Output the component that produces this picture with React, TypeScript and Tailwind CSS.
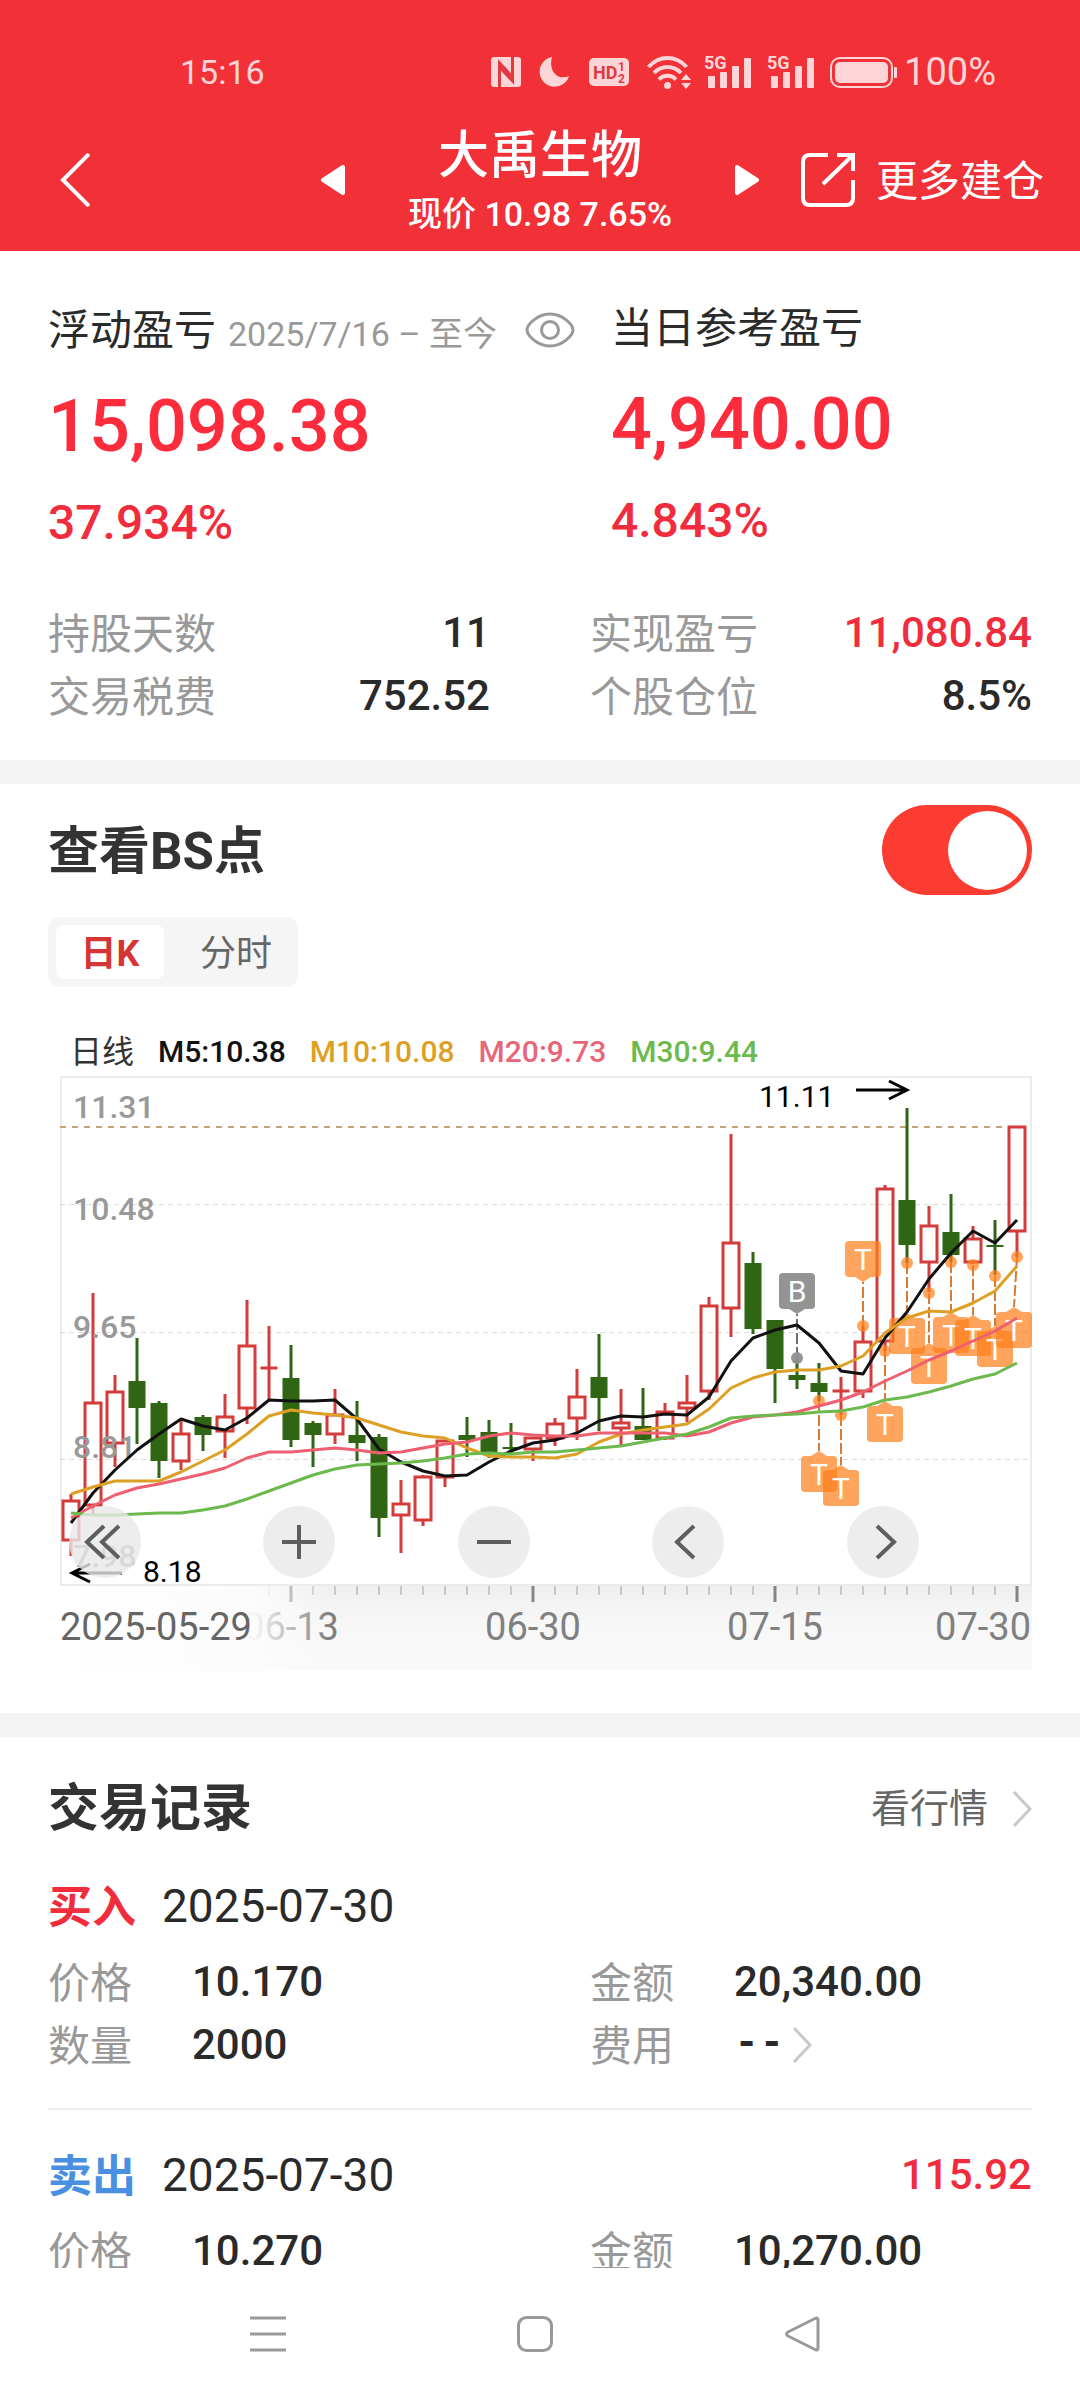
import { useState, type ReactNode } from "react";

const STEP = 22;
const FIRST = 11;
const cx = (i: number) => FIRST + STEP * i;

type Candle = ["r" | "g", number, number, number, number];

// direction, high, body top, body bottom, low
const candles: Candle[] = [
  ["r", 418, 425, 464, 480],
  ["r", 217, 327, 429, 438],
  ["r", 299, 316, 367, 391],
  ["g", 262, 305, 332, 368],
  ["g", 325, 327, 385, 402],
  ["r", 344, 358, 385, 394],
  ["g", 339, 341, 359, 375],
  ["r", 318, 341, 355, 382],
  ["r", 224, 270, 332, 348],
  ["r", 250, 292, 292, 324],
  ["g", 269, 302, 364, 371],
  ["g", 345, 347, 359, 391],
  ["r", 313, 339, 358, 368],
  ["g", 325, 359, 367, 385],
  ["g", 358, 361, 442, 461],
  ["r", 404, 428, 439, 477],
  ["r", 399, 401, 444, 450],
  ["r", 364, 365, 401, 411],
  ["g", 341, 359, 364, 381],
  ["g", 344, 356, 376, 382],
  ["g", 347, 372, 372, 379],
  ["r", 361, 362, 373, 385],
  ["r", 342, 348, 362, 370],
  ["r", 293, 321, 342, 364],
  ["g", 258, 301, 322, 355],
  ["r", 313, 347, 352, 369],
  ["g", 312, 350, 364, 364],
  ["r", 327, 336, 362, 364],
  ["r", 299, 327, 332, 346],
  ["r", 221, 230, 315, 324],
  ["r", 58, 167, 232, 261],
  ["g", 176, 187, 253, 258],
  ["g", 244, 244, 293, 327],
  ["g", 282, 299, 304, 313],
  ["g", 287, 307, 316, 325],
  ["r", 301, 315, 315, 339],
  ["r", 250, 266, 315, 322],
  ["r", 109, 113, 265, 275],
  ["g", 32, 124, 169, 187],
  ["r", 130, 150, 186, 216],
  ["g", 118, 156, 179, 186],
  ["r", 150, 163, 186, 188],
  ["g", 144, 170, 170, 199],
  ["r", 51, 51, 155, 181],
];

const ma5 = [447, 417, 394, 374, 358, 343, 350, 354, 342, 324, 325, 325, 324, 343, 373, 386, 395, 400, 399, 386, 375, 367, 364, 357, 345, 340, 341, 338, 339, 321, 285, 262, 254, 249, 267, 295, 298, 262, 236, 203, 177, 155, 167, 144];
const ma10 = [418, 411, 405, 405, 405, 396, 385, 374, 358, 340, 334, 337, 339, 342, 349, 356, 360, 362, 372, 380, 381, 381, 382, 378, 366, 358, 354, 351, 348, 333, 312, 302, 296, 294, 294, 290, 280, 257, 242, 235, 236, 227, 215, 190];
const ma20 = [442, 430, 419, 412, 408, 403, 398, 392, 382, 376, 376, 374, 372, 374, 377, 376, 372, 368, 366, 360, 357, 359, 360, 360, 357, 357, 357, 357, 360, 356, 347, 341, 339, 336, 330, 324, 316, 305, 295, 284, 275, 265, 255, 242];
const ma30 = [437, 439, 439, 438, 437, 437, 434, 430, 423, 415, 407, 399, 393, 389, 388, 387, 385, 382, 378, 377, 378, 376, 376, 374, 372, 370, 366, 362, 358, 351, 342, 340, 339, 338, 336, 335, 331, 324, 321, 316, 310, 303, 298, 287];

type Marker = { i: number; dot: number; box: number; x?: number; kind?: "B" };

const markers: Marker[] = [
  { i: 33, dot: 282, box: 197, kind: "B" },
  { i: 36, dot: 250, box: 165 },
  { i: 34, dot: 325, box: 380 },
  { i: 35, dot: 339, box: 394 },
  { i: 37, dot: 275, box: 330 },
  { i: 38, dot: 187, box: 242 },
  { i: 39, dot: 217, box: 272 },
  { i: 40, dot: 186, box: 241 },
  { i: 41, dot: 189, box: 244 },
  { i: 42, dot: 200, box: 255 },
  { i: 43, dot: 181, box: 236, x: 954 },
];

const toPoints = (ys: number[]) => ys.map((y, i) => `${cx(i)},${y}`).join(" ");

function CandleShape({ i, c }: { i: number; c: Candle }) {
  const [dir, high, top, bottom, low] = c;
  const x = cx(i);
  if (dir === "g") {
    return (
      <g fill="#2f6513">
        <rect x={x - 1.5} y={high} width={3} height={low - high} />
        <rect x={x - 8.5} y={top === bottom ? top - 1 : top} width={17} height={Math.max(bottom - top, 2)} />
      </g>
    );
  }
  return (
    <g stroke="#d43b3b" strokeWidth={3} fill="none">
      <path d={`M${x} ${high}V${top}M${x} ${bottom}V${low}`} />
      {top === bottom ? <path d={`M${x - 8.5} ${top}h17`} /> : <rect x={x - 8} y={top} width={16} height={bottom - top} />}
    </g>
  );
}

function MarkerShape({ m }: { m: Marker }) {
  const x = cx(m.i);
  const bx = m.x ?? x;
  const below = m.box > m.dot;
  const color = m.kind === "B" ? "#8f8f8f" : "#ff801b";
  const opacity = m.kind === "B" ? 0.95 : 0.71;
  const tip = below ? m.box - 5 : m.box + 41;
  const edge = below ? m.box : m.box + 36;
  return (
    <g>
      <path d={`M${x} ${m.dot}L${bx} ${tip}`} stroke={m.kind === "B" ? "#6e6e6e" : "#d97a33"} strokeWidth={2} strokeDasharray="11 3" />
      <circle cx={x} cy={m.dot} r={6} fill={color} opacity={opacity} />
      <g fill={color} opacity={opacity}>
        <rect x={bx - 18} y={m.box} width={36} height={36} rx={4} />
        <path d={`M${bx - 8} ${edge}L${bx} ${tip}L${bx + 8} ${edge}Z`} />
      </g>
      <text x={bx} y={m.box + 29} textAnchor="middle" fontSize={30} fill="#fff">
        {m.kind ?? "T"}
      </text>
    </g>
  );
}

function CandleChart() {
  const labels: [string, number][] = [
    ["11.31", 42],
    ["10.48", 144],
    ["9.65", 262],
    ["8.81", 382],
    ["7.98", 491],
  ];
  return (
    <svg viewBox="0 0 972 510" className="block h-auto w-full overflow-visible" role="img" aria-label="日K线图">
      <rect x={1} y={1} width={970} height={508} fill="none" stroke="#ebebeb" strokeWidth={2} />
      <g stroke="#dcdcdc" strokeWidth={1} strokeDasharray="5 4">
        <path d="M0 128.5H972M0 256.5H972M0 383.5H972" />
      </g>
      <path d="M0 51H950" stroke="#c4a474" strokeWidth={2} strokeDasharray="6 6" />
      {candles.map((c, i) => (
        <CandleShape key={i} i={i} c={c} />
      ))}
      <g fontSize={32} fontWeight={500} fill="#999">
        {labels.map(([t, y]) => (
          <text key={t} x={13} y={y}>
            {t}
          </text>
        ))}
      </g>
      {markers.map((m) => (
        <MarkerShape key={m.i} m={m} />
      ))}
      <g fill="none" strokeWidth={3} strokeLinejoin="round">
        <polyline points={toPoints(ma5)} stroke="#111" />
        <polyline points={toPoints(ma10)} stroke="#dd9f24" />
        <polyline points={toPoints(ma20)} stroke="#ee6070" />
        <polyline points={toPoints(ma30)} stroke="#6cb94e" />
      </g>
      <g fontSize={30} fill="#000">
        <text x={699} y={31}>11.11</text>
        <text x={83} y={506}>8.18</text>
      </g>
      <g fill="none" stroke="#000" strokeWidth={3}>
        <path d="M796 14H847M829 5L847 14L829 23" />
        <path d="M62 497H12M30 488L12 497L30 506" />
      </g>
    </svg>
  );
}

function TimeAxis() {
  const ticks = Array.from({ length: 35 }, (_, k) => k + 9);
  const major = new Set([10, 21, 32, 43]);
  return (
    <svg viewBox="0 0 972 85" className="block h-auto w-full" role="img" aria-label="时间轴">
      <defs>
        <linearGradient id="strip" x1="0" y1="0" x2="0" y2="1">
          <stop offset="0" stopColor="#efefef" />
          <stop offset="0.4" stopColor="#f7f7f7" />
          <stop offset="1" stopColor="#fafafa" />
        </linearGradient>
        <linearGradient id="fade" x1="0" y1="0" x2="1" y2="0">
          <stop offset="0" stopColor="#fff" />
          <stop offset="0.72" stopColor="#fcfcfc" stopOpacity="0.95" />
          <stop offset="1" stopColor="#fafafa" stopOpacity="0" />
        </linearGradient>
      </defs>
      <rect width={972} height={85} fill="url(#strip)" />
      <g stroke="#a0a0a0">
        {ticks.map((i) =>
          major.has(i) ? (
            <path key={i} d={`M${cx(i)} 0V16`} stroke="#858585" strokeWidth={3} />
          ) : (
            <path key={i} d={`M${cx(i)} 0V9`} strokeWidth={1} />
          ),
        )}
      </g>
      <g fontSize={38} fill="#808080">
        <text x={231} y={54} textAnchor="middle">06-13</text>
        <text x={473} y={54} textAnchor="middle">06-30</text>
        <text x={715} y={54} textAnchor="middle">07-15</text>
        <text x={971} y={54} textAnchor="end">07-30</text>
      </g>
      <rect width={270} height={85} fill="url(#fade)" />
      <text x={0} y={54} fontSize={38} fill="#666">2025-05-29</text>
    </svg>
  );
}

function RoundButton({ label, path }: { label: string; path: string }) {
  return (
    <div className="pl-[9px]">
      <button type="button" aria-label={label} className="flex size-[72px] items-center justify-center rounded-full bg-[#e9e9e9]/80">
        <svg viewBox="0 0 72 72" className="size-[72px]" fill="none" stroke="#5e5e5e" strokeWidth={4}>
          <path d={path} />
        </svg>
      </button>
    </div>
  );
}

function Stat({ label, value, red }: { label: string; value: string; red?: boolean }) {
  return (
    <div className="flex items-center justify-between text-[42px] leading-[63px]">
      <dt className="pt-1 leading-[59px] text-[#999]">{label}</dt>
      <dd className={red ? "font-medium text-[#f02c3d]" : "font-medium text-[#2a2a2a]"}>{value}</dd>
    </div>
  );
}

function Field({ label, children }: { label: string; children: ReactNode }) {
  return (
    <div className="flex items-center text-[42px] leading-[63px]">
      <dt className="w-36 pt-1 leading-[59px] text-[#999]">{label}</dt>
      <dd className="flex items-center gap-2 font-medium text-[#2a2a2a]">{children}</dd>
    </div>
  );
}

function Chevron() {
  return (
    <svg viewBox="0 0 20 36" className="h-9 w-5" fill="none" stroke="#c8c8c8" strokeWidth={3}>
      <path d="M2 1L18 18L2 35" />
    </svg>
  );
}

function Signal() {
  return (
    <svg viewBox="0 0 46 34" className="h-[34px] w-[46px] overflow-visible" fill="#fdd5d7">
      <text x={-1} y={14} fontSize={18} fontWeight={700}>5G</text>
      <rect x={3} y={21} width={7} height={12} rx={1} />
      <rect x={15} y={17} width={7} height={16} rx={1} />
      <rect x={27} y={11} width={7} height={22} rx={1} />
      <rect x={39} y={3} width={7} height={30} rx={1} />
    </svg>
  );
}

function StatusBar() {
  return (
    <div className="flex h-12 items-center justify-between pr-[84px] pl-[180px] text-[#fdd5d7]">
      <span className="text-[34px] leading-12">15:16</span>
      <div className="flex items-center">
        <svg viewBox="0 0 30 30" className="size-[30px]">
          <rect width={30} height={30} rx={3} fill="#fdd5d7" />
          <path d="M8.500 30V6L21.500 20M21.500 0V24L8.500 10" fill="none" stroke="#e03a42" strokeWidth={3} />
        </svg>
        <svg viewBox="0 0 30 30" className="ml-[18px] size-[30px]" fill="#fdd5d7">
          <path d="M13 0A15 15 0 1 0 30 19C19 24 9 14 13 0Z" />
        </svg>
        <svg viewBox="0 0 40 28" className="ml-5 h-7 w-10 overflow-visible">
          <rect width={40} height={28} rx={5} fill="#fdd5d7" />
          <g fill="#e03a42" fontWeight={700}>
            <text x={4} y={21} fontSize={18}>HD</text>
            <text x={29} y={13} fontSize={12}>1</text>
            <text x={29} y={25} fontSize={12}>2</text>
          </g>
        </svg>
        <svg viewBox="0 0 44 34" className="ml-[18px] h-[34px] w-11" fill="none" stroke="#fdd5d7" strokeWidth={4}>
          <path d="M1.500 12C12 0 29 0 39.500 12M7 18C14.500 10 26.500 10 34 18M12 24.500C16.500 19.500 24.500 19.500 29 24.500" />
          <circle cx={20.5} cy={30.5} r={3.5} fill="#fdd5d7" stroke="none" />
          <path d="M34 25L39 19L44 25ZM34 28H44L39 34Z" fill="#fdd5d7" stroke="none" />
        </svg>
        <div className="ml-3.5 flex gap-[17px]">
          <Signal />
          <Signal />
        </div>
        <svg viewBox="0 0 67 31" className="ml-4 h-[31px] w-[67px]">
          <rect x={1} y={1} width={61} height={29} rx={9} fill="none" stroke="#fdd5d7" strokeWidth={2} />
          <rect x={5} y={5} width={53} height={21} rx={5} fill="#fdd5d7" />
          <rect x={64} y={10} width={3} height={11} rx={1} fill="#fdd5d7" />
        </svg>
        <span className="ml-[7px] text-[38px] leading-12">100%</span>
      </div>
    </div>
  );
}

function Triangle({ flip }: { flip?: boolean }) {
  return (
    <svg viewBox="0 0 24 30" className={flip ? "h-[30px] w-6 rotate-180" : "h-[30px] w-6"} fill="#fff" stroke="#fff" strokeWidth={4} strokeLinejoin="round">
      <path d="M22 2V28L2 15Z" />
    </svg>
  );
}

function Header() {
  return (
    <header className="shrink-0 bg-[#f13038] pt-12 pb-[15px] text-white">
      <StatusBar />
      <div className="mt-7 grid grid-cols-[1fr_438px_1fr] items-center">
        <button type="button" aria-label="返回" className="pl-[60px]">
          <svg viewBox="0 0 30 54" className="h-[54px] w-[30px]" fill="none" stroke="#fff" strokeWidth={4}>
            <path d="M29 1L3 27L29 53" />
          </svg>
        </button>
        <div className="flex items-center justify-between">
          <button type="button" aria-label="上一只">
            <Triangle />
          </button>
          <div className="flex flex-col items-center gap-1">
            <h1 className="text-[51px] leading-[64px] font-medium">大禹生物</h1>
            <p className="text-[34px] leading-[44px] font-medium">现价 10.98 7.65%</p>
          </div>
          <button type="button" aria-label="下一只">
            <Triangle flip />
          </button>
        </div>
        <a href="#more" className="flex items-center justify-end gap-[21px] pr-9 text-[42px] leading-[60px] whitespace-nowrap">
          <svg viewBox="0 0 54 54" className="size-[54px]" fill="none" stroke="#fff" strokeWidth={4}>
            <path d="M27 2H9Q2 2 2 9V45Q2 52 9 52H45Q52 52 52 45V27M36 2H52V18M52 2L22 31" />
          </svg>
          <span className="pt-1">更多建仓</span>
        </a>
      </div>
    </header>
  );
}

function Summary() {
  return (
    <section className="px-12 pt-12 pb-[33px]">
      <div className="grid grid-cols-[563fr_421fr]">
        <div>
          <div className="flex h-[62px] items-center">
            <h2 className="text-[42px] text-[#2a2a2a]">浮动盈亏</h2>
            <span className="ml-3 pt-2 text-[34px] whitespace-nowrap text-[#999]">2025/7/16 – 至今</span>
            <button type="button" aria-label="显示或隐藏金额" className="mr-9 ml-auto">
              <svg viewBox="0 0 50 36" className="h-9 w-[50px]" fill="none" stroke="#999" strokeWidth={3}>
                <path d="M2 18C2 13 12 2 25 2S48 13 48 18S38 34 25 34S2 23 2 18Z" />
                <circle cx={25} cy={18} r={8.5} />
              </svg>
            </button>
          </div>
          <p className="mt-6 text-[72px] leading-[84px] font-medium text-[#fc2c3c]">15,098.38</p>
          <p className="mt-6 text-[48px] leading-[60px] font-medium text-[#f02c3d]">37.934%</p>
        </div>
        <div>
          <h2 className="text-[42px] leading-[60px] text-[#2a2a2a]">当日参考盈亏</h2>
          <p className="mt-6 text-[72px] leading-[84px] font-medium text-[#fc2c3c]">4,940.00</p>
          <p className="mt-6 text-[48px] leading-[60px] font-medium text-[#f02c3d]">4.843%</p>
        </div>
      </div>
      <dl className="mt-12 grid grid-cols-2 gap-x-[100px]">
        <Stat label="持股天数" value="11" />
        <Stat label="实现盈亏" value="11,080.84" red />
        <Stat label="交易税费" value="752.52" />
        <Stat label="个股仓位" value="8.5%" />
      </dl>
    </section>
  );
}

function ChartSection() {
  const [on, setOn] = useState(true);
  return (
    <section className="px-12 pt-[21px] pb-[42px]">
      <div className="flex items-center justify-between">
        <label htmlFor="bs" className="pt-1 text-[51px] leading-[64px] font-bold text-[#333]">
          查看BS点
        </label>
        <input
          id="bs"
          type="checkbox"
          role="switch"
          checked={on}
          onChange={(e) => setOn(e.target.checked)}
          className="flex h-[90px] w-[150px] appearance-none items-center rounded-full bg-gray-300 px-[5px] before:block before:size-[79px] before:rounded-full before:bg-white checked:justify-end checked:bg-[#fc3c31]"
        />
      </div>
      <div className="mt-[22px] flex w-fit rounded-xl bg-[#f5f5f5] p-2 text-[36px] leading-[50px]">
        <button type="button" className="w-[108px] rounded-lg bg-white pt-1 text-center font-bold text-[#d63535]">
          日K
        </button>
        <button type="button" className="w-[126px] pt-1 pl-[18px] text-center text-[#666]">
          分时
        </button>
      </div>
      <div className="mt-[41px] flex gap-6 pl-[22px] text-[30px] leading-12 font-medium">
        <span className="text-[32px] font-normal text-[#333]">日线</span>
        <span className="text-[#111]">M5:10.38</span>
        <span className="text-[#dd9f24]">M10:10.08</span>
        <span className="text-[#e8667a]">M20:9.73</span>
        <span className="text-[#6cb94e]">M30:9.44</span>
      </div>
      <div className="ml-3">
        <div className="relative">
          <CandleChart />
          <div className="absolute inset-x-0 bottom-2 grid grid-cols-5">
            <RoundButton label="最早" path="M35 20L18 36L35 52M50 20L33 36L50 52" />
            <RoundButton label="放大" path="M19 36H53M36 19V53" />
            <RoundButton label="缩小" path="M19 36H53" />
            <RoundButton label="向左" path="M42 20L25 36L42 52" />
            <RoundButton label="向右" path="M30 20L47 36L30 52" />
          </div>
        </div>
        <TimeAxis />
      </div>
    </section>
  );
}

function RecordHead({ side, color, profit }: { side: string; color: string; profit?: string }) {
  return (
    <div className="flex items-center">
      <h3 className={color}>{side}</h3>
      <time dateTime="2025-07-30" className="ml-[26px] pb-1 text-[46px] leading-[56px] text-[#2a2a2a]">
        2025-07-30
      </time>
      {profit && <span className="ml-auto pb-1 text-[42px] leading-[56px] font-medium text-[#f02c3d]">{profit}</span>}
    </div>
  );
}

function Records() {
  return (
    <section className="px-12 pt-10">
      <div className="flex items-center justify-between">
        <h2 className="text-[51px] leading-[64px] font-bold text-[#333]">交易记录</h2>
        <a href="#quote" className="flex items-center gap-6 text-[39px] leading-[60px] text-[#666]">
          看行情
          <Chevron />
        </a>
      </div>
      <article className="border-b-2 border-[#efefef] pt-[37px] pb-8">
        <RecordHead side="买入" color="text-[44px] leading-[60px] font-bold text-[#f02c3d]" />
        <dl className="mt-3 grid grid-cols-2 gap-x-[100px]">
          <Field label="价格">10.170</Field>
          <Field label="金额">20,340.00</Field>
          <Field label="数量">2000</Field>
          <Field label="费用">
            <span className="font-['Liberation_Mono',monospace] font-bold">--</span>
            <Chevron />
          </Field>
        </dl>
      </article>
      <article className="pt-[37px] pb-8">
        <RecordHead side="卖出" color="text-[44px] leading-[60px] font-bold text-[#4a90e2]" profit="115.92" />
        <dl className="mt-3 grid grid-cols-2 gap-x-[100px]">
          <Field label="价格">10.270</Field>
          <Field label="金额">10,270.00</Field>
        </dl>
      </article>
    </section>
  );
}

function SystemNav() {
  return (
    <nav className="grid h-[132px] shrink-0 grid-cols-3 items-center justify-items-center bg-white pr-[144px] pl-[134px]">
      <button type="button" aria-label="最近任务">
        <svg viewBox="0 0 36 36" className="size-9" stroke="#999" strokeWidth={3}>
          <path d="M0 2H36M0 18H36M0 34H36" />
        </svg>
      </button>
      <button type="button" aria-label="主屏幕">
        <svg viewBox="0 0 36 36" className="size-9" fill="none" stroke="#999" strokeWidth={3}>
          <rect x={1.5} y={1.5} width={33} height={33} rx={8} />
        </svg>
      </button>
      <button type="button" aria-label="返回上一页">
        <svg viewBox="0 0 36 36" className="size-9" fill="none" stroke="#999" strokeWidth={3} strokeLinejoin="round">
          <path d="M34 4V32Q34 35 31 33.500L4 20Q1 18 4 16L31 2.500Q34 1 34 4Z" />
        </svg>
      </button>
    </nav>
  );
}

export default function App() {
  return (
    <div className="flex h-screen flex-col bg-white font-[Roboto,'Noto_Sans_CJK_SC',sans-serif]">
      <Header />
      <main className="min-h-0 flex-1 overflow-y-auto [scrollbar-width:none]">
        <Summary />
        <div className="h-6 bg-[#f4f4f4]" />
        <ChartSection />
        <div className="h-6 bg-[#f4f4f4]" />
        <Records />
      </main>
      <SystemNav />
    </div>
  );
}
